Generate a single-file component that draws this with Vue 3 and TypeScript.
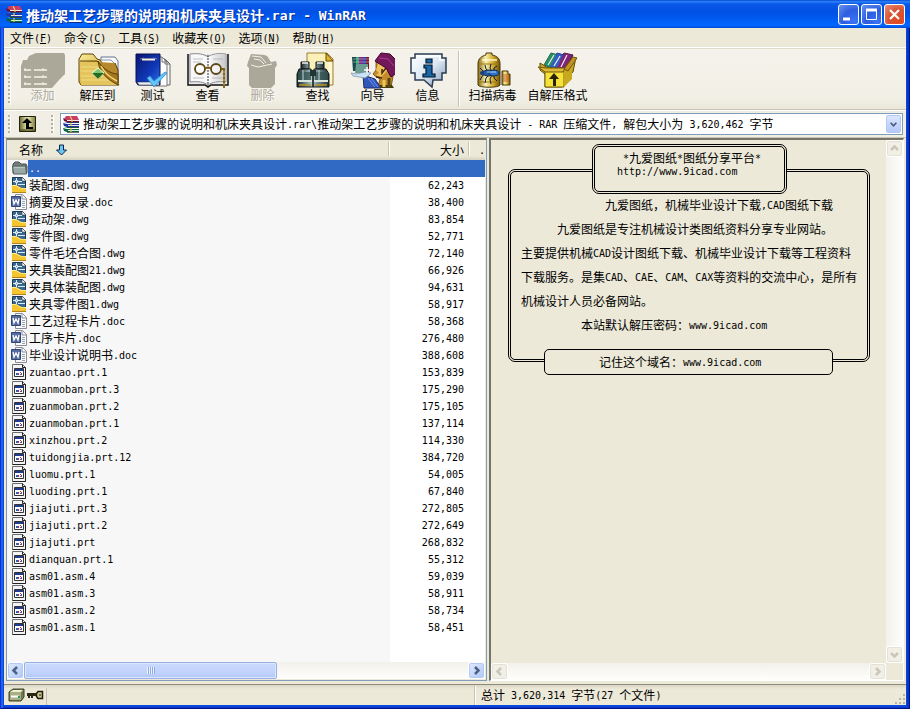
<script setup lang="ts">
import { computed, h, ref } from 'vue'
import type { FunctionalComponent } from 'vue'

type FileKind = 'dwg' | 'doc' | 'prt'
interface Entry { name: string; size: string; kind: FileKind }
interface Tool { id: string; label: string; disabled?: boolean }

/* Sets half-width characters at half the width of the ideographs beside them. */
const Txt: FunctionalComponent<{ t: string }> = (props) =>
  (props.t.match(/[\x20-\x7e]+|[^\x20-\x7e]+/g) ?? []).map((run) =>
    /[\x20-\x7e]/.test(run) ? h('span', { class: 'half' }, run) : run,
  )
Txt.props = ['t']

const archive = '推动架工艺步骤的说明和机床夹具设计'

const menus = [
  { label: '文件', key: 'F' },
  { label: '命令', key: 'C' },
  { label: '工具', key: 'S' },
  { label: '收藏夹', key: 'O' },
  { label: '选项', key: 'N' },
  { label: '帮助', key: 'H' },
]

const mainTools: Tool[] = [
  { id: 'add', label: '添加', disabled: true },
  { id: 'extract', label: '解压到' },
  { id: 'test', label: '测试' },
  { id: 'view', label: '查看' },
  { id: 'delete', label: '删除', disabled: true },
  { id: 'find', label: '查找' },
  { id: 'wizard', label: '向导' },
  { id: 'info', label: '信息' },
]
const extraTools: Tool[] = [
  { id: 'scan', label: '扫描病毒' },
  { id: 'sfx', label: '自解压格式' },
]

const paths = [`${archive}.rar\\${archive} - RAR 压缩文件, 解包大小为 3,620,462 字节`]
const path = ref(paths[0])

const list: [string, string][] = [
  ['装配图.dwg', '62,243'],
  ['摘要及目录.doc', '38,400'],
  ['推动架.dwg', '83,854'],
  ['零件图.dwg', '52,771'],
  ['零件毛坯合图.dwg', '72,140'],
  ['夹具装配图21.dwg', '66,926'],
  ['夹具体装配图.dwg', '94,631'],
  ['夹具零件图1.dwg', '58,917'],
  ['工艺过程卡片.doc', '58,368'],
  ['工序卡片.doc', '276,480'],
  ['毕业设计说明书.doc', '388,608'],
  ['zuantao.prt.1', '153,839'],
  ['zuanmoban.prt.3', '175,290'],
  ['zuanmoban.prt.2', '175,105'],
  ['zuanmoban.prt.1', '137,114'],
  ['xinzhou.prt.2', '114,330'],
  ['tuidongjia.prt.12', '384,720'],
  ['luomu.prt.1', '54,005'],
  ['luoding.prt.1', '67,840'],
  ['jiajuti.prt.3', '272,805'],
  ['jiajuti.prt.2', '272,649'],
  ['jiajuti.prt', '268,832'],
  ['dianquan.prt.1', '55,312'],
  ['asm01.asm.4', '59,039'],
  ['asm01.asm.3', '58,911'],
  ['asm01.asm.2', '58,734'],
  ['asm01.asm.1', '58,451'],
]
const entries = computed<Entry[]>(() =>
  list.map(([name, size]) => ({
    name,
    size,
    kind: name.endsWith('.dwg') ? 'dwg' : name.endsWith('.doc') ? 'doc' : 'prt',
  })),
)
const selected = ref('..')
</script>

<template>
  <svg class="defs" width="0" height="0" aria-hidden="true">
    <defs>
      <linearGradient id="gold" x1="0" y1="0" x2="1" y2="1">
        <stop offset="0" stop-color="#fbeea0" /><stop offset=".5" stop-color="#d9b440" /><stop offset="1" stop-color="#8a5f10" />
      </linearGradient>
      <linearGradient id="blue" x1="0" y1="0" x2="1" y2="1">
        <stop offset="0" stop-color="#0a1670" /><stop offset=".6" stop-color="#1038b8" /><stop offset="1" stop-color="#2a72e8" />
      </linearGradient>
      <linearGradient id="tank" x1="0" y1="0" x2="1" y2="0">
        <stop offset="0" stop-color="#8a6a10" /><stop offset=".35" stop-color="#f8f0b0" /><stop offset=".7" stop-color="#d0a828" /><stop offset="1" stop-color="#6e5008" />
      </linearGradient>
      <linearGradient id="steel" x1="0" y1="0" x2="1" y2="0">
        <stop offset="0" stop-color="#182428" /><stop offset=".45" stop-color="#a8c4c4" /><stop offset="1" stop-color="#203034" />
      </linearGradient>
      <linearGradient id="page" x1="0" y1="0" x2="1" y2="0">
        <stop offset="0" stop-color="#ffffff" /><stop offset="1" stop-color="#b8b8bc" />
      </linearGradient>
      <linearGradient id="bubble" x1="0" y1="0" x2="1" y2="1">
        <stop offset="0" stop-color="#ffffff" /><stop offset=".5" stop-color="#dce8f4" /><stop offset="1" stop-color="#7f97b4" />
      </linearGradient>
      <linearGradient id="khaki" x1="0" y1="0" x2="1" y2="0">
        <stop offset="0" stop-color="#6c6a30" /><stop offset=".5" stop-color="#f0eebc" /><stop offset="1" stop-color="#7c7a3c" />
      </linearGradient>
    </defs>

    <symbol id="i-rar" viewBox="0 0 17 17">
      <path d="M3 0h11l2 4H4L1 3z" fill="#c83c68" /><path d="M0 2l4 2h12v2H4L1 5z" fill="#6e0c2c" /><path d="M4 4.500h12" stroke="#f4e8ec" />
      <path d="M1 6h3l12 0v1H4z" fill="#5878d8" /><path d="M0 7l4 1h12v3H4L1 10z" fill="#20389c" /><path d="M5 9.500h11" stroke="#e4ecfc" />
      <path d="M1 11h15v1H4z" fill="#3cac78" /><path d="M0 12l4 1h12v3H4L1 15z" fill="#0c6440" /><path d="M5 14.500h11" stroke="#d8f4e4" />
      <path d="M7 0l2 4v2M8 7v3M8 12v4" stroke="#e8c850" stroke-width="1.200" fill="none" />
      <path d="M4 6.500h12M4 11.500h12M4 16.500h12" stroke="#141414" stroke-width=".6" />
    </symbol>

    <symbol id="i-add" viewBox="0 0 44 38">
      <path d="M0 14l2-6 4 0 2-4 7-3h28l1 2v19l-4 4-2 2-7 8H0z" fill="#aca899" />
      <path d="M3 18h7m3 0h13M3 25h7m3 0h13M3 32h7m3 0h13" stroke="#f3f1e7" stroke-width="1.500" />
      <path d="M4 16v3m18-3v3M4 23v3m18-3v3M4 30v3m18-3v3" stroke="#f3f1e7" />
    </symbol>

    <symbol id="i-extract" viewBox="0 0 44 38">
      <path d="M25 5h14l3 4v22H25z" fill="#f8fafc" stroke="#62728c" /><path d="M23 8h12l3 3v12" fill="#fff" stroke="#8494a8" />
      <path d="M3 7l3-5h11l4 5 3 1 19 25H5l-2-3z" fill="url(#gold)" stroke="#5c4208" />
      <path d="M4 9h17l21 22V18l-3-7" fill="#b8882c" stroke="#5c4208" />
      <path d="M4 10h17c1 9 9 17 21 22v1H5z" fill="#e6c45c" /><path d="M5 15h17M5 19h19M5 24h23M5 28h29" stroke="#f4df8c" stroke-width=".8" />
      <path d="M22 9c1 10 8 18 20 24V22C35 22 27 17 22 9z" fill="#a4761c" stroke="#4c3404" stroke-width=".8" /><path d="M25 14c3 6 8 11 16 15" stroke="#f4d878" stroke-width="1.500" fill="none" />
      <path d="M22 16l6 5-6 6-6-6z" fill="#7cc470" stroke="#f4ffdc" /><path d="M16 21l6 6 6-6z" fill="#256c24" />
    </symbol>

    <symbol id="i-test" viewBox="0 0 44 38">
      <path d="M25 7h9l5 5v21H25z" fill="#f8f8f8" stroke="#666" /><path d="M22 5h9l5 5v24H22z" fill="#fff" stroke="#777" /><path d="M31 5v5h5M34 7v5h5" fill="none" stroke="#777" />
      <path d="M5 2h24v31H7l-2-3z" fill="url(#blue)" stroke="#061050" /><path d="M6 30h22v3H8z" fill="#e8ecf4" stroke="#223" stroke-width=".5" />
      <path d="M11 7.500h13" stroke="#f4f0d8" stroke-width="2" /><path d="M9 7l4-1m9 0l4 1" stroke="#88a" />
      <path d="M16 26l3-2 4 5L34 20l2 1-13 14z" fill="#62c6f8" stroke="#2480c8" stroke-width=".7" />
    </symbol>

    <symbol id="i-view" viewBox="0 0 44 38">
      <path d="M2 2v31h17l3 2 3-2h17V2" fill="#e8e8ec" stroke="#111" stroke-width="1.500" />
      <path d="M4 2c8-1 14 0 18 3 4-3 10-4 18-3v28c-8-1-14 0-18 3-4-3-10-4-18-3z" fill="#f8f8fa" stroke="#888" />
      <path d="M22 5v27c4-3 10-4 17-3V3c-8-1-14 0-17 2z" fill="url(#page)" opacity=".7" /><path d="M22 3v31" stroke="#333" stroke-dasharray="2 1" />
      <path d="M7 7h10M7 10h8M27 7h10M7 26h11M26 26h10" stroke="#aaa" stroke-width=".7" />
      <circle cx="14" cy="17" r="5" fill="#fff8" stroke="#5c4818" stroke-width="1.800" /><circle cx="30" cy="17" r="5" fill="#fff8" stroke="#5c4818" stroke-width="1.800" />
      <path d="M19 17c1-2 5-2 6 0M35 17h3v19M9 17H8" fill="none" stroke="#7c5c10" stroke-width="1.800" /><path d="M38 19v15" stroke="#d8b448" stroke-dasharray="2 2" />
    </symbol>

    <symbol id="i-delete" viewBox="0 0 44 38">
      <path d="M7 10l3-8 14 1 6 7 5-1 1 4-2 3v16l-4 4H11l-3-3V16l-2-2z" fill="#aca899" />
      <path d="M11 4l9 1 5 6M13 7l6 1 4 4M10 13l7 2 14-3" stroke="#f3f1e7" fill="none" /><path d="M25 4l3 5" stroke="#aca899" stroke-width="2" />
    </symbol>

    <symbol id="i-find" viewBox="0 0 44 38">
      <path d="M11 1h20l6 6v26H11z" fill="#fbf0b8" stroke="#a08034" /><path d="M30 1v8h7z" fill="#e8b428" stroke="#604808" /><path d="M34 10v22" stroke="#fff8d8" stroke-width="3" />
      <path d="M5 10h8v7H5zM20 10h8v7h-8z" fill="url(#steel)" stroke="#111" /><path d="M6 11h6M21 11h6" stroke="#eef4f4" stroke-width="1.500" />
      <path d="M3 17h12l2 6v12H1V22zM18 17h12l3 5v13H17V23z" fill="url(#steel)" stroke="#101818" />
      <path d="M2 20h13v8H2zM19 20h13v8H19z" fill="#345454" opacity=".75" /><path d="M14 18h6v6h-6z" fill="#223434" />
      <path d="M2 29h14M18 29h14" stroke="#d8e4e0" stroke-width="2" /><path d="M3 33h12M19 33h12" stroke="#b49020" stroke-width="1.500" />
      <path d="M7 18v10M23 18v10" stroke="#c4d8d8" />
    </symbol>

    <symbol id="i-wizard" viewBox="0 0 44 38">
      <path d="M1 5h7v14H2z" fill="#164c4c" /><path d="M5 5h4v14H5z" fill="#2ca474" /><path d="M8 5h4v15H8z" fill="#862080" /><path d="M12 5h4v15h-4z" fill="#2744b4" /><path d="M15 5h3v15h-3z" fill="#801428" />
      <path d="M2 7h16M2 10h16" stroke="#ddd" stroke-width=".5" /><path d="M5 12h12v9H4z" fill="#6b9b91" />
      <path d="M25 10h15l2 15-2 10H27l2-8-5-3-2-2 3-4z" fill="#c48b28" stroke="#523408" stroke-width=".7" />
      <path d="M27 12l-2 6 3 3-3 2 5 2 6-6V11z" fill="#efc25c" /><path d="M31 17v4l4-5M25 25l6 1" stroke="#49280c" stroke-width="1.500" fill="none" />
      <path d="M24 9l6-8 9 1 8 8-1 11-6 4-5-9z" fill="#74185c" stroke="#42052e" /><path d="M28 6l9 1 6 7" stroke="#ad3d93" fill="none" />
      <path d="M12 23l6 2 6 2 4 6 2 3H13z" fill="#3157ba" stroke="#1b2c69" /><path d="M17 26l7 9M20 26l7 9" stroke="#7094ea" />
      <path d="M0 21l5 1 9-2 6 1-3 3-3 2-6-1-6-1z" fill="#cce3f6" stroke="#7289a5" stroke-width=".7" /><path d="M16 15v6m-3-3h6" stroke="#fff" stroke-width="1.500" />
      <path d="M29 33h12l2 3H29z" fill="#463c0e" /><path d="M33 28v7" stroke="#e8c858" stroke-width="3" /><path d="M38 26v9" stroke="#5a4410" stroke-width="3" />
    </symbol>

    <symbol id="i-info" viewBox="0 0 44 38">
      <path d="M9 2h27v4h4v15h-4v7h-9l-1 7-8-7H9v-7H5V6h4z" fill="url(#bubble)" stroke="#2b3d52" stroke-width="1.500" />
      <path d="M11 4h23v4h4" fill="none" stroke="#fff" stroke-width="1.500" />
      <path d="M20 7h6v4h-6zM18 13h8v9h3v3H17v-3h3v-6h-2z" fill="#1766a8" stroke="#071829" stroke-width="1.200" />
    </symbol>

    <symbol id="i-scan" viewBox="0 0 44 38">
      <path d="M7 12c0-6 4-8 8-9V1h6v2c5 1 8 3 8 9v21c-1 3-21 3-22 0z" fill="url(#tank)" stroke="#4b3b0c" />
      <path d="M31 19h6v3h2v11h-8z" fill="url(#tank)" stroke="#4b3b0c" /><path d="M32 22h6v8h-6z" fill="#c7522b" opacity=".45" />
      <path d="M8 12h20M8 30h20" stroke="#9c7b17" /><path d="M11 8h15" stroke="#fff7c7" stroke-width="1.500" />
      <path d="M14 13l1 4 3 3M20 12l-1 4 2 4M26 14l-3 2v4M9 16l3 3 4 1M9 28l3-5 4-1M14 31l1-5 3-3M20 32l-1-5 2-4M26 29l-3-3v-4" fill="none" stroke="#101d3c" />
      <ellipse cx="17" cy="21" rx="5" ry="3" fill="#245ca7" stroke="#0d2953" /><ellipse cx="23" cy="21" rx="5" ry="3" fill="#3070c8" stroke="#0d2953" />
      <circle cx="11" cy="21" r="2" fill="#173e75" /><path d="M16 20h9" stroke="#a3d7fa" />
    </symbol>

    <symbol id="i-sfx" viewBox="0 0 44 38">
      <path d="M8 13L15 1l7 2-6 13z" fill="#269066" stroke="#135033" /><path d="M14 14L21 1l7 2-6 13z" fill="#315fc0" stroke="#172d72" /><path d="M21 15l7-14 9 2-7 14z" fill="#7e2575" stroke="#401039" />
      <path d="M12 13l6-10M18 14l6-10M25 15l7-12" stroke="#f1e7f3" stroke-width="1.200" />
      <path d="M4 11l8 5h17l11-11-3 15-5 4v4l-6 7H9V22l-5-4z" fill="#cda824" stroke="#5f4b08" />
      <path d="M8 13L15 1l6 2-5 12z" fill="#269066" /><path d="M14 15L21 1l6 2-5 12z" fill="#315fc0" /><path d="M21 16l7-15 8 2-7 13z" fill="#7e2575" /><path d="M12 13l6-10M18 14l6-10M25 15l6-12" stroke="#f1e7f3" stroke-width="1.200" />
      <path d="M9 19h19v16H9z" fill="#f5e13a" stroke="#74610b" /><path d="M28 19l8-7v15l-8 8z" fill="#c8a81c" />
      <path d="M2 15l7 5h18l2-4H10z" fill="#dcb937" stroke="#725804" /><path d="M28 17l9-12 4 1-9 13z" fill="#c19423" stroke="#725804" />
      <path d="M18 21l5 6h-3v7h-3v-7h-4z" fill="#29230a" />
    </symbol>

    <symbol id="i-up" viewBox="0 0 17 16">
      <path d="M.5.5h16v15H.5z" fill="url(#khaki)" stroke="#222208" /><path d="M1 13h15v2H1z" fill="#55531f" opacity=".7" />
      <path d="M8 2l5 5h-3v4h4v2H7V7H3z" fill="#000" />
    </symbol>

    <symbol id="i-folder" viewBox="0 0 17 16">
      <path d="M2 13V4l2-2h4l2 2h5l1 2v7z" fill="#74807c" stroke="#46514f" /><path d="M1.500 6h13l1 8h-13z" fill="#98a8a4" stroke="#536260" /><path d="M3 7.500h11" stroke="#b9c6c2" />
    </symbol>
    <symbol id="i-dwg" viewBox="0 0 17 16">
      <path d="M1.500.5h10l3 3v12h-13z" fill="#3c6890" stroke="#1b3852" /><path d="M11 0v4h4z" fill="#fff" stroke="#333" stroke-width=".6" />
      <path d="M1 8h3c3 0 4 4 11 3v5H1z" fill="#f6c42c" /><path d="M1 8.500h3c3 0 4 4 11 3" stroke="#fff08c" fill="none" />
      <path d="M2 4.500h3m2 0h4M5.500 1v2m0 3v2M7 7.500h7" stroke="#d8edf6" /><path d="M4.500 3.500h2v2h-2z" fill="#7ca0bc" stroke="#fff" stroke-width=".8" /><path d="M1 15.500h14" stroke="#b08418" />
    </symbol>
    <symbol id="i-doc" viewBox="0 0 17 16">
      <path d="M4.500.5h7l4 4v11h-11z" fill="#f9fafc" stroke="#8b8d96" /><path d="M11 1v4h4" fill="none" stroke="#8b8d96" /><path d="M11 7.500h3M11 9.500h3M11 11.500h3M11 13.500h3" stroke="#9ba1af" />
      <path d="M.5 2.500h9v10h-9z" fill="#536a9f" stroke="#324673" /><path d="M2 5l1 5 2-4 2 4 1-5" fill="none" stroke="#fff" stroke-width="1.300" />
    </symbol>
    <symbol id="i-prt" viewBox="0 0 17 16">
      <path d="M1.500.5h10l3 3v12h-13z" fill="#f4f4f4" stroke="#6c6c6c" /><path d="M11.500.5v3h3v12h-13" stroke="#222" fill="none" />
      <path d="M3.500 4.500h9v8h-9z" fill="#fff" stroke="#333" /><path d="M4 5h8v2H4z" fill="#203c90" /><path d="M5 9h2v2H5z" fill="#2c60b8" /><path d="M7 9h1v2H7z" fill="#c03040" /><path d="M9 8h1v1H9zM9 10h1v1H9z" fill="#c03040" /><path d="M10 9h1v2h-1z" fill="#3460b4" />
    </symbol>
  </svg>

  <main class="window">
    <header class="title-bar">
      <svg class="app-icon" aria-hidden="true"><use href="#i-rar" /></svg>
      <h1><Txt :t="`${archive}.rar - WinRAR`" /></h1>
      <button class="win-btn" aria-label="最小化"><svg viewBox="0 0 19 19"><path d="M4 14h7" stroke="#fff" stroke-width="3" /></svg></button>
      <button class="win-btn" aria-label="最大化"><svg viewBox="0 0 19 19"><path d="M4.500 5.500h10v9h-10z" fill="none" stroke="#fff" /><path d="M4 5h11" stroke="#fff" stroke-width="3" /></svg></button>
      <button class="win-btn close" aria-label="关闭"><svg viewBox="0 0 19 19"><path d="M5 5l9 9m0-9l-9 9" stroke="#fff" stroke-width="2.200" /></svg></button>
    </header>

    <nav class="menu-bar">
      <button v-for="m in menus" :key="m.key">{{ m.label }}<span class="half">(<u>{{ m.key }}</u>)</span></button>
    </nav>

    <div class="toolbar">
      <i class="grip"></i>
      <button v-for="t in mainTools" :key="t.id" class="tool" :disabled="t.disabled">
        <svg aria-hidden="true"><use :href="`#i-${t.id}`" /></svg><span>{{ t.label }}</span>
      </button>
      <i class="divider"></i>
      <button v-for="t in extraTools" :key="t.id" class="tool wide">
        <svg aria-hidden="true"><use :href="`#i-${t.id}`" /></svg><span>{{ t.label }}</span>
      </button>
    </div>

    <div class="address-bar">
      <i class="grip"></i>
      <button class="up" aria-label="向上"><svg aria-hidden="true"><use href="#i-up" /></svg></button>
      <i class="grip"></i>
      <div class="combo">
        <svg class="app-icon" aria-hidden="true"><use href="#i-rar" /></svg>
        <span class="combo-text" aria-hidden="true"><Txt :t="path" /></span>
        <span class="combo-arrow"><svg viewBox="0 0 15 19"><path d="M4 8l3.500 3.500L11 8" fill="none" stroke="#4d6185" stroke-width="2" /></svg></span>
        <select v-model="path" aria-label="地址">
          <option v-for="p in paths" :key="p" :value="p">{{ p }}</option>
        </select>
      </div>
    </div>

    <section class="panes">
      <div class="pane files">
        <div class="list">
          <table>
            <colgroup><col /><col class="col-size" /><col class="col-rest" /></colgroup>
            <thead>
              <tr>
                <th>
                  <span class="head-name">名称
                    <svg viewBox="0 0 13 12"><path d="M4.500 1h4v5h3l-5 5-5-5h3z" fill="#6cc4f0" stroke="#06264c" /></svg>
                  </span>
                </th>
                <th class="num">大小</th>
                <th class="num"><span class="half">.</span></th>
              </tr>
            </thead>
            <tbody>
              <tr :class="{ selected: selected === '..' }" @click="selected = '..'">
                <td><span class="file"><svg><use href="#i-folder" /></svg><span class="name"><Txt t=".." /></span></span></td>
                <td class="num"></td>
                <td></td>
              </tr>
              <tr v-for="e in entries" :key="e.name" :class="{ selected: selected === e.name }" @click="selected = e.name">
                <td><span class="file"><svg><use :href="`#i-${e.kind}`" /></svg><span class="name"><Txt :t="e.name" /></span></span></td>
                <td class="num"><Txt :t="e.size" /></td>
                <td></td>
              </tr>
            </tbody>
          </table>
        </div>
        <div class="hbar">
          <button aria-label="向左滚动"><svg viewBox="0 0 15 15"><path d="M9 4L5.500 7.500 9 11" /></svg></button>
          <div class="track"><div class="thumb"><i></i></div></div>
          <button aria-label="向右滚动"><svg viewBox="0 0 15 15"><path d="M6 4l3.500 3.500L6 11" /></svg></button>
        </div>
      </div>

      <div class="pane comment">
        <div class="comment-row">
          <article class="note">
            <header class="note-head">
              <p><Txt t="*九爱图纸*图纸分享平台*" /></p>
              <p class="url"><Txt t="http://www.9icad.com" /></p>
            </header>
            <div class="note-body">
              <p class="indent-7"><Txt t="九爱图纸，机械毕业设计下载,CAD图纸下载" /></p>
              <p class="indent-3"><Txt t="九爱图纸是专注机械设计类图纸资料分享专业网站。" /></p>
              <p><Txt t="主要提供机械CAD设计图纸下载、机械毕业设计下载等工程资料" /></p>
              <p><Txt t="下载服务。是集CAD、CAE、CAM、CAX等资料的交流中心，是所有" /></p>
              <p><Txt t="机械设计人员必备网站。" /></p>
              <p class="indent-5"><Txt t="本站默认解压密码：www.9icad.com" /></p>
            </div>
            <footer class="note-foot"><Txt t="记住这个域名：www.9icad.com" /></footer>
          </article>
          <div class="vbar off">
            <button disabled aria-label="向上滚动"><svg viewBox="0 0 15 15"><path d="M4 9l3.500-3.500L11 9" /></svg></button>
            <div class="track"></div>
            <button disabled aria-label="向下滚动"><svg viewBox="0 0 15 15"><path d="M4 6l3.500 3.500L11 6" /></svg></button>
          </div>
        </div>
        <div class="hbar off">
          <button disabled aria-label="向左滚动"><svg viewBox="0 0 15 15"><path d="M9 4L5.500 7.500 9 11" /></svg></button>
          <div class="track"></div>
          <button disabled aria-label="向右滚动"><svg viewBox="0 0 15 15"><path d="M6 4l3.500 3.500L6 11" /></svg></button>
        </div>
      </div>
    </section>

    <footer class="status">
      <div class="status-icons">
        <svg viewBox="0 0 17 14"><path d="M1 4l4-3h11v8l-3 4H1z" fill="#74784c" stroke="#3e4228" /><path d="M2 4h11v8H2z" fill="#a8b084" /><path d="M2 4l3-2h10l-2 2z" fill="#eef0d4" /><path d="M3 8.500h8" stroke="#fff" stroke-width="2" /><path d="M10 8h2v2h-2z" fill="#1d9c5c" /></svg>
        <svg viewBox="0 0 17 14"><path d="M0 5h11v3H0zM1 8h2v2H1zM4 8h2v2H4z" fill="#2a2812" /><path d="M11 3.500h4.500v7H11l-1.500-2v-3z" fill="#c9c58c" stroke="#1d1c0c" stroke-width="1.500" /><path d="M13 6v2" stroke="#1d1c0c" /></svg>
      </div>
      <div class="status-text"><Txt t="总计 3,620,314 字节(27 个文件)" /></div>
      <svg class="size-grip" viewBox="0 0 12 12"><path d="M9 1h2v2H9zM9 5h2v2H9zM9 9h2v2H9zM5 5h2v2H5zM5 9h2v2H5zM1 9h2v2H1z" fill="#b8b4a3" /></svg>
    </footer>
  </main>
</template>

<style>
body {
  margin: 0;
  background: #ece9d8;
}
.half {
  font-family: "DejaVu Sans Mono", "Liberation Mono", monospace;
  font-size: 10px;
  line-height: 0;
  vertical-align: 1px;
  white-space: pre;
}
</style>

<style scoped>
* {
  box-sizing: border-box;
}
.defs {
  position: absolute;
}
.window {
  display: flex;
  flex-direction: column;
  min-height: 100vh;
  padding: 0 4px 4px;
  background: #0a48dc;
  box-shadow: inset 1px 0 #0831d9, inset -1px -1px #00138c, inset 3px 0 #1c63ea, inset -3px -2px #0a35c4;
  font-family: "Noto Sans CJK SC", sans-serif;
  font-size: 12px;
  line-height: 14px;
  color: #000;
  cursor: default;
}
button {
  padding: 0;
  border: 0;
  background: none;
  font: inherit;
  color: inherit;
}
p,
h1 {
  margin: 0;
}
svg {
  display: block;
  flex: none;
}

.title-bar {
  display: flex;
  align-items: center;
  gap: 2px;
  height: 28px;
  margin: 0 -4px;
  padding: 1px 5px 0 6px;
  background: linear-gradient(#0848d0, #2a82f8 6%, #0a58e8 14%, #0050e4 45%, #0062fa 80%, #0066ff 92%, #0048d0);
}
.app-icon {
  width: 17px;
  height: 17px;
}
h1 {
  flex: 1;
  min-width: 0;
  padding-left: 1px;
  overflow: hidden;
  font-size: 14px;
  line-height: 20px;
  font-weight: 700;
  white-space: nowrap;
  color: #fff;
  text-shadow: 1px 1px #0a2a90;
}
h1 :deep(.half) {
  font-size: 13px;
}
.win-btn {
  width: 21px;
  height: 21px;
  border: 1px solid #fff;
  border-radius: 3px;
  background: radial-gradient(circle at 80% 85%, #3a74f4, #2c5ce0 50%, #6a94f0);
}
.win-btn.close {
  background: radial-gradient(circle at 75% 80%, #e04a20, #d85432 50%, #eb9078);
}

.menu-bar {
  display: flex;
  height: 20px;
  background: #ece9d8;
  border-bottom: 1px solid #fff;
}
.menu-bar button {
  padding: 0 6px;
  line-height: 17px;
}
u {
  text-underline-offset: 1px;
}

.toolbar {
  display: flex;
  height: 62px;
  padding: 2px 4px;
  background: linear-gradient(#f4f2ea, #f2f0e6 80%, #ebe8da);
  border-top: 1px solid #dfdccb;
  border-bottom: 1px solid #c9c5b2;
}
.grip {
  width: 3px;
  margin: 2px 4px 2px 0;
  background: repeating-linear-gradient(#b5b19f 0 2px, transparent 2px 4px);
  border-right: 1px solid #fff;
}
.tool {
  display: flex;
  flex-direction: column;
  align-items: center;
  width: 55px;
}
.tool.wide {
  width: 65px;
}
.tool svg {
  width: 44px;
  height: 38px;
  margin-top: 1px;
  overflow: visible;
}
.tool span {
  white-space: nowrap;
  margin-top: -2px;
}
.tool:disabled span {
  color: #aca899;
  text-shadow: 1px 1px #fff;
}
.divider {
  width: 2px;
  margin-left: 3px;
  border-left: 1px solid #c5c2b2;
  border-right: 1px solid #fff;
}

.address-bar {
  display: flex;
  align-items: stretch;
  height: 28px;
  padding: 2px 3px 2px 4px;
  background: #f1efe5;
  border-top: 1px solid #fff;
  border-bottom: 1px solid #c9c5b2;
}
.up {
  width: 17px;
  margin: 0 15px 0 4px;
}
.up svg {
  width: 17px;
  height: 16px;
}
.combo {
  position: relative;
  display: flex;
  flex: 1;
  align-items: center;
  min-width: 0;
  padding: 1px 1px 1px 2px;
  margin-left: 2px;
  background: #fff;
  border: 1px solid #7f9db9;
}
.combo-text {
  flex: 1;
  min-width: 0;
  padding-left: 3px;
  overflow: hidden;
  line-height: 18px;
  white-space: nowrap;
}
.combo-arrow {
  width: 15px;
  align-self: stretch;
  border: 1px solid #b4c8f6;
  border-radius: 2px;
  background: linear-gradient(#dce7fe, #b4c8f8);
}
.combo-arrow svg {
  width: 100%;
  height: 100%;
}
.combo select {
  position: absolute;
  inset: 0;
  width: 100%;
  opacity: 0;
}

.panes {
  display: grid;
  grid-template-columns: 484fr 418fr;
  flex: 1;
  padding-bottom: 3px;
  background: #ece9d8;
}
.pane {
  display: flex;
  flex-direction: column;
  min-width: 0;
}
.files {
  margin: 0 1px 0 2px;
  padding: 0 1px 1px 0;
  border: 1px solid #7f9db9;
  border-top: 2px solid #77756a;
}
.list {
  flex: 1;
  overflow: hidden;
  background: linear-gradient(to left, #fff 95px, #f7f7f7 95px);
}
table {
  width: 100%;
  table-layout: fixed;
  border-collapse: collapse;
}
.col-size {
  width: 80px;
}
.col-rest {
  width: 15px;
}
th {
  height: 20px;
  padding: 0 0 0 12px;
  font-weight: 400;
  text-align: left;
  background: linear-gradient(to left, #fff 1px, #c7c5b2 1px 2px, transparent 2px) 0 2px / 100% 14px no-repeat, linear-gradient(#ece9d8 80%, #d6d2c2);
}
th:last-child {
  background: linear-gradient(#ece9d8 80%, #d6d2c2);
}
.head-name {
  display: flex;
  gap: 12px;
  align-items: center;
}
.head-name svg {
  width: 13px;
  height: 12px;
}
td {
  height: 17px;
  padding: 0;
  line-height: 15px;
  vertical-align: top;
  white-space: nowrap;
}
.num {
  padding: 0 6px 0 0;
  text-align: right;
}
th:last-child {
  padding: 0;
}
.file {
  display: flex;
  height: 17px;
  padding-left: 4px;
}
.file svg {
  width: 17px;
  height: 16px;
}
.name {
  flex: 1;
  padding-left: 1px;
}
.selected .name,
.selected td + td {
  background: #316ac5;
  color: #fff;
}

.hbar,
.vbar {
  display: flex;
  background: linear-gradient(#f3f1ec, #fefefb);
}
.hbar {
  height: 17px;
}
.vbar {
  flex-direction: column;
  width: 17px;
  background: linear-gradient(to right, #f3f1ec, #fefefb);
}
.track {
  flex: 1;
}
.hbar button,
.vbar button {
  width: 17px;
  height: 17px;
  border: 1px solid #fff;
  border-radius: 3px;
  background: linear-gradient(135deg, #e1eafe, #aec8f7);
  box-shadow: inset 0 0 0 1px #b4c8f6;
}
.hbar path,
.vbar path {
  fill: none;
  stroke: #4d6185;
  stroke-width: 2.5;
}
.hbar.off {
  margin-right: 17px;
}
.off button {
  background: #f1efe6;
  box-shadow: inset 0 0 0 1px #e4e2d6;
}
.off path {
  stroke: #c9c7ba;
}
.thumb {
  display: flex;
  align-items: center;
  justify-content: center;
  width: 57%;
  height: 17px;
  border: 1px solid #98b0e4;
  border-radius: 2px;
  background: linear-gradient(#cbdafd, #bfd2fc 70%, #b0c6f6);
  box-shadow: inset 0 0 0 1px #dce7ff;
}
.thumb i {
  width: 8px;
  height: 7px;
  background: repeating-linear-gradient(to right, #eef4fe 0 1px, #8caae6 1px 2px);
}

.comment {
  margin: 0 2px 0 1px;
  border-left: 2px solid #77756a;
  border-top: 2px solid #77756a;
  border-bottom: 1px solid #fff;
  border-right: 1px solid #fff;
}
.comment-row {
  display: flex;
  flex: 1;
}
.note {
  flex: 1;
  min-width: 0;
  padding: 4px 16px 0 17px;
}
.note-head {
  position: relative;
  width: 195px;
  height: 50px;
  margin-left: 84px;
  padding: 4px 0 0 28px;
  border: 3px double #000;
  border-radius: 7px;
  background: #ece9d8;
  line-height: 13px;
}
.note-head .url {
  margin-left: -6px;
}
.note-body {
  width: 362px;
  margin-top: -25px;
  padding: 21px 0 22px 10px;
  border: 3px double #000;
  border-radius: 7px;
  line-height: 24px;
  white-space: nowrap;
}
.indent-3 {
  padding-left: 36px;
}
.indent-5 {
  padding-left: 60px;
}
.indent-7 {
  padding-left: 84px;
}
.note-foot {
  position: relative;
  width: 289px;
  margin: -13px 0 0 36px;
  padding-left: 54px;
  border: 1px solid #000;
  border-radius: 5px;
  background: #ece9d8;
  line-height: 24px;
}

.status {
  display: grid;
  grid-template-columns: 471fr 419fr 12px;
  height: 21px;
  padding-top: 1px;
  border-top: 1px solid #8f8c7c;
  background: linear-gradient(#d9d6c7, #ece9d8 4px);
}
.status-icons {
  display: flex;
  gap: 2px;
  padding: 2px 0 0 4px;
  border-right: 1px solid #c5c2b2;
}
.status-icons svg {
  width: 17px;
  height: 14px;
}
.status-icons::after {
  content: "";
  width: 1px;
  background: #c5c2b2;
}
.status-text {
  padding-left: 5px;
  border-left: 1px solid #fff;
  line-height: 18px;
}
.size-grip {
  align-self: end;
  width: 12px;
  height: 12px;
}
</style>
